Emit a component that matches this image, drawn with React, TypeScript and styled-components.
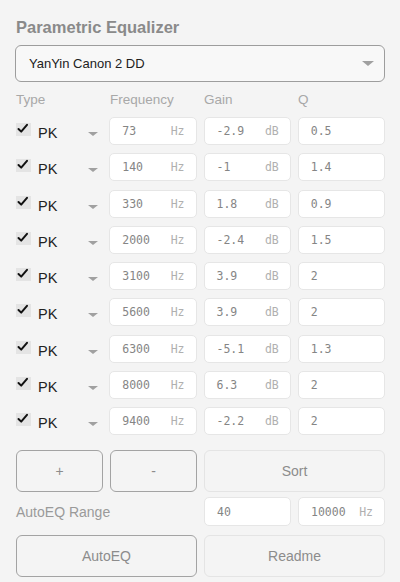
import React from "react";
import styled, { createGlobalStyle } from "styled-components";

const Global = createGlobalStyle`
  html, body { margin: 0; padding: 0; background: #f4f4f4; }
  body { font-family: "Liberation Sans", Arial, sans-serif; }
`;

const Page = styled.div`
  width: 400px;
  height: 582px;
  box-sizing: border-box;
  padding: 17px 15px 0 15px;
  background: #f4f4f4;
  overflow: hidden;
`;

const Title = styled.h1`
  margin: 0 0 7px 1px;
  font-size: 16.5px;
  line-height: 21px;
  font-weight: bold;
  color: #8a8a8a;
`;

const Select = styled.div`
  height: 37px;
  box-sizing: border-box;
  border: 1px solid #9d9d9d;
  border-radius: 6px;
  background: #f8f8f8;
  display: flex;
  align-items: center;
  justify-content: space-between;
  padding: 0 10px 0 13px;
  font-size: 13px;
  color: #222;
`;

const Caret = styled.span<{ $size?: number; $color?: string }>`
  display: block;
  width: 0;
  height: 0;
  border-left: ${(p) => p.$size ?? 6}px solid transparent;
  border-right: ${(p) => p.$size ?? 6}px solid transparent;
  border-top: ${(p) => (p.$size ?? 6) - 1}px solid ${(p) => p.$color ?? "#a0a0a0"};
`;

const Grid = styled.div`
  display: grid;
  grid-template-columns: repeat(4, 1fr);
  column-gap: 7px;
  align-items: center;
`;

const Header = styled(Grid)`
  height: 20px;
  margin: 7px 0 8px 1px;
  font-size: 13.5px;
  color: #a8a8a8;
`;

const Rows = styled.div`
  display: flex;
  flex-direction: column;
  gap: 8.25px;
`;

const Row = styled(Grid)`
  height: 28px;
`;

const TypeCell = styled.div`
  display: flex;
  align-items: center;
  height: 100%;
  padding-left: 1px;
`;

const Check = styled.span`
  width: 15px;
  height: 13px;
  background: #e4e4e4;
  position: relative;
  margin-top: -3px;
  flex: none;
  svg { position: absolute; left: 1px; top: 0px; }
`;

const TypeLabel = styled.span`
  font-size: 14.5px;
  color: #222;
  margin-left: 7px;
  margin-top: 4px;
  flex: 1;
`;

const TypeCaret = styled.span`
  margin-right: 4px;
  margin-top: 6px;
`;

const Field = styled.div<{ $h?: number }>`
  height: ${(p) => p.$h ?? 28}px;
  box-sizing: border-box;
  background: #fff;
  border: 1px solid #e6e6e6;
  border-radius: 5px;
  display: flex;
  align-items: center;
  justify-content: space-between;
  padding: 0 11px 0 12px;
  font-family: "DejaVu Sans Mono", "Liberation Mono", monospace;
  font-size: 11.5px;
  color: #858585;
`;

const Unit = styled.span`
  color: #b0b0b0;
`;

const Btn = styled.div<{ $strong?: boolean; $span?: number; $h?: number }>`
  grid-column: span ${(p) => p.$span ?? 1};
  height: ${(p) => p.$h ?? 42}px;
  box-sizing: border-box;
  border: 1px solid ${(p) => (p.$strong ? "#a3a3a3" : "#e4e4e4")};
  border-radius: 6px;
  background: #f4f4f4;
  display: flex;
  align-items: center;
  justify-content: center;
  font-size: 14px;
  color: #8c8c8c;
`;

const ButtonRow = styled(Grid)`
  margin-top: 15px;
  padding-left: 1px;
`;

const RangeRow = styled(Grid)`
  margin-top: 5px;
  padding-left: 1px;
`;

const RangeLabel = styled.div`
  grid-column: span 2;
  font-size: 14px;
  color: #9a9a9a;
`;

const BottomRow = styled(Grid)`
  margin-top: 9px;
  padding-left: 1px;
`;

const bands = [
  { f: 73, g: "-2.9", q: "0.5" },
  { f: 140, g: "-1", q: "1.4" },
  { f: 330, g: "1.8", q: "0.9" },
  { f: 2000, g: "-2.4", q: "1.5" },
  { f: 3100, g: "3.9", q: "2" },
  { f: 5600, g: "3.9", q: "2" },
  { f: 6300, g: "-5.1", q: "1.3" },
  { f: 8000, g: "6.3", q: "2" },
  { f: 9400, g: "-2.2", q: "2" },
];

const CheckMark = () => (
  <svg width="12" height="11" viewBox="0 0 12 11">
    <path d="M1.5 6 L4.2 8.6 L10 1.8" fill="none" stroke="#111" strokeWidth="2" strokeLinecap="round" strokeLinejoin="round" />
  </svg>
);

export default function App() {
  return (
    <Page>
      <Global />
      <Title>Parametric Equalizer</Title>
      <Select>
        <span>YanYin Canon 2 DD</span>
        <Caret $size={6} />
      </Select>
      <Header>
        <span>Type</span>
        <span>Frequency</span>
        <span>Gain</span>
        <span>Q</span>
      </Header>
      <Rows>
        {bands.map((b, i) => (
          <Row key={i}>
            <TypeCell>
              <Check>
                <CheckMark />
              </Check>
              <TypeLabel>PK</TypeLabel>
              <TypeCaret>
                <Caret $size={5} />
              </TypeCaret>
            </TypeCell>
            <Field>
              <span>{b.f}</span>
              <Unit>Hz</Unit>
            </Field>
            <Field>
              <span>{b.g}</span>
              <Unit>dB</Unit>
            </Field>
            <Field>
              <span>{b.q}</span>
            </Field>
          </Row>
        ))}
      </Rows>
      <ButtonRow>
        <Btn $strong>+</Btn>
        <Btn $strong>-</Btn>
        <Btn $span={2}>Sort</Btn>
      </ButtonRow>
      <RangeRow>
        <RangeLabel>AutoEQ Range</RangeLabel>
        <Field $h={29}>
          <span>40</span>
        </Field>
        <Field $h={29}>
          <span>10000</span>
          <Unit>Hz</Unit>
        </Field>
      </RangeRow>
      <BottomRow>
        <Btn $strong $span={2}>AutoEQ</Btn>
        <Btn $span={2}>Readme</Btn>
      </BottomRow>
    </Page>
  );
}
